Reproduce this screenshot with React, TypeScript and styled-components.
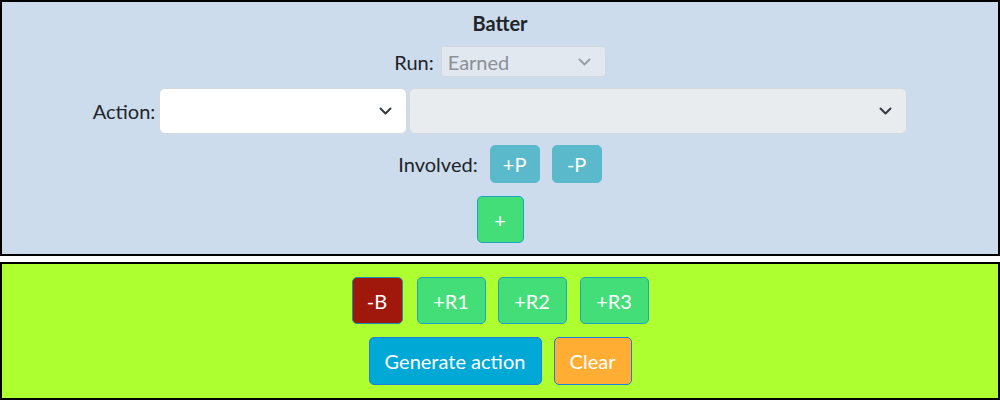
import React from "react";
import styled, { createGlobalStyle } from "styled-components";

const FONT = `Lato, "Noto Sans", sans-serif`;

const Global = createGlobalStyle`
  html, body { margin: 0; padding: 0; background: #fff; }
  body { font-family: ${FONT}; color: #212529; }
  * { box-sizing: border-box; }
`;

const Page = styled.div`
  width: 1000px;
  height: 400px;
  display: flex;
  flex-direction: column;
  gap: 6px;
`;

const TopPanel = styled.section`
  height: 256px;
  border: 2px solid #000;
  background: #ccdcec;
  display: flex;
  flex-direction: column;
  align-items: center;
  padding-top: 9px;
`;

const BottomPanel = styled.section`
  height: 138px;
  border: 2px solid #000;
  background: #adff2f;
  display: flex;
  flex-direction: column;
  align-items: center;
  padding-top: 13px;
  gap: 13px;
`;

const Title = styled.div`
  font-weight: 700;
  font-size: 20px;
  line-height: 25px;
  height: 25px;
`;

const Row = styled.div<{ $mt?: number; $gap?: number }>`
  display: flex;
  align-items: center;
  justify-content: center;
  margin-top: ${(p) => p.$mt ?? 0}px;
  gap: ${(p) => p.$gap ?? 0}px;
`;

const Label = styled.span<{ $mr?: number }>`
  font-size: 20px;
  color: #212529;
  margin-right: ${(p) => p.$mr ?? 6}px;
`;

const SelectWrap = styled.div<{ $w: number; $h: number; $bg: string; $ml?: number }>`
  position: relative;
  width: ${(p) => p.$w}px;
  height: ${(p) => p.$h}px;
  margin-left: ${(p) => p.$ml ?? 0}px;
  background: ${(p) => p.$bg};
  border: 1px solid #d4d9de;
  border-radius: ${(p) => (p.$h > 40 ? 6 : 3)}px;
`;

const SelectText = styled.span`
  position: absolute;
  left: 6px;
  top: 50%;
  transform: translateY(-50%);
  font-size: 20px;
  color: #8a9096;
`;

const Chevron = styled.svg`
  position: absolute;
  right: 14px;
  top: 50%;
  transform: translateY(-50%);
`;

const Btn = styled.button<{ $w: number; $h: number; $bg: string; $bd: string; $fs?: number }>`
  width: ${(p) => p.$w}px;
  height: ${(p) => p.$h}px;
  background: ${(p) => p.$bg};
  border: 1px solid ${(p) => p.$bd};
  border-radius: 5px;
  color: #fff;
  font-family: ${FONT};
  font-size: ${(p) => p.$fs ?? 20}px;
  padding: 0;
  display: flex;
  align-items: center;
  justify-content: center;
`;

const Arrow = ({ color }: { color: string }) => (
  <Chevron width="13" height="8" viewBox="0 0 13 8">
    <path d="M1.5 1.5 L6.5 6.5 L11.5 1.5" fill="none" stroke={color} strokeWidth="2" strokeLinecap="round" strokeLinejoin="round" />
  </Chevron>
);

export default function App() {
  return (
    <>
      <Global />
      <Page>
        <TopPanel>
          <Title>Batter</Title>
          <Row $mt={10}>
            <Label $mr={7}>Run:</Label>
            <SelectWrap $w={165} $h={31} $bg="#e2e8f0">
              <SelectText>Earned</SelectText>
              <Arrow color="#9aa0a6" />
            </SelectWrap>
          </Row>
          <Row $mt={11}>
            <Label $mr={4}>Action:</Label>
            <SelectWrap $w={248} $h={46} $bg="#ffffff">
              <Arrow color="#343a40" />
            </SelectWrap>
            <SelectWrap $w={498} $h={46} $bg="#e9ecef" $ml={2}>
              <Arrow color="#343a40" />
            </SelectWrap>
          </Row>
          <Row $mt={11} $gap={12}>
            <Label $mr={0}>Involved:</Label>
            <Btn $w={50} $h={38} $bg="#5bb9cc" $bd="#5bb9cc">+P</Btn>
            <Btn $w={50} $h={38} $bg="#5bb9cc" $bd="#5bb9cc">-P</Btn>
          </Row>
          <Row $mt={13}>
            <Btn $w={47} $h={47} $bg="#44de78" $bd="#1ea4c4">+</Btn>
          </Row>
        </TopPanel>
        <BottomPanel>
          <Row $gap={12}>
            <Btn $w={51} $h={47} $bg="#a0180c" $bd="#1e8fb4">-B</Btn>
            <Btn $w={69} $h={47} $bg="#44de78" $bd="#1ea4c4" style={{ marginLeft: 2 }}>+R1</Btn>
            <Btn $w={69} $h={47} $bg="#44de78" $bd="#1ea4c4">+R2</Btn>
            <Btn $w={69} $h={47} $bg="#44de78" $bd="#1ea4c4" style={{ marginLeft: 1 }}>+R3</Btn>
          </Row>
          <Row $gap={12}>
            <Btn $w={173} $h={48} $bg="#00a8d6" $bd="#1e7fe0">Generate action</Btn>
            <Btn $w={78} $h={48} $bg="#ffad33" $bd="#1e7fe0">Clear</Btn>
          </Row>
        </BottomPanel>
      </Page>
    </>
  );
}
